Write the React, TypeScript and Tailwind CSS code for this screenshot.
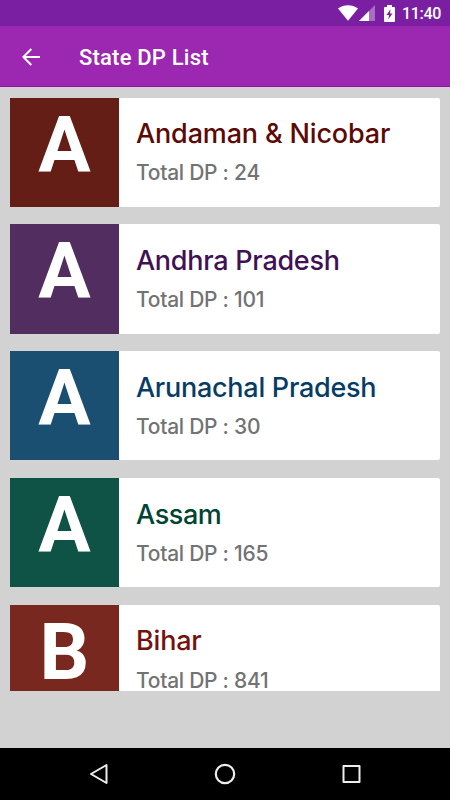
import React from 'react';

interface StateItem {
  name: string;
  total: number;
  tile: string;
  title: string;
}

const states: StateItem[] = [
  { name: 'Andaman & Nicobar', total: 24, tile: 'bg-[#641e16]', title: 'text-[#5c0a05] tracking-[-0.15px]' },
  { name: 'Andhra Pradesh', total: 101, tile: 'bg-[#512e5f]', title: 'text-[#3f1155] tracking-[-0.27px]' },
  { name: 'Arunachal Pradesh', total: 30, tile: 'bg-[#1b4f72]', title: 'text-[#063c66] tracking-[-0.27px]' },
  { name: 'Assam', total: 165, tile: 'bg-[#0e5345]', title: 'text-[#004433] tracking-[-0.4px]' },
  { name: 'Bihar', total: 841, tile: 'bg-[#78281f]', title: 'text-[#74130e] tracking-[-0.2px]' },
];

const StatusBar: React.FC = () => (
  <div className="h-[26px] shrink-0 bg-[#7b1fa2] flex items-center justify-end pr-[9px] text-white">
    <svg width="20" height="16" viewBox="0 0 20 16" fill="currentColor">
      <path d="M0 3.5C5.5-1 14.5-1 20 3.5L10 15.8Z" />
    </svg>
    <svg className="ml-[1px]" width="16" height="16" viewBox="0 0 16 16" fill="currentColor">
      <path d="M0 16L16 0V16Z" opacity="0.35" />
      <path d="M0 16L10 6V16Z" />
    </svg>
    <svg className="ml-[9px]" width="11" height="17" viewBox="0 0 11 17">
      <path d="M3 0H8V2H10Q11 2 11 3V16Q11 17 10 17H1Q0 17 0 16V3Q0 2 1 2H3Z" fill="#fff" />
      <path d="M6.5 4.2L2.5 10H5L4.4 14.3L8.5 8.6H6Z" fill="#7b1fa2" />
    </svg>
    <span className="ml-[7px] pt-[2px] font-['Roboto',sans-serif] font-medium text-[16px] leading-[24px] tracking-[-0.3px]">11:40</span>
  </div>
);

const AppBar: React.FC = () => (
  <div className="h-[61px] shrink-0 bg-[#9c27b0] border-b border-[#9412ae] flex items-center pl-[22px] text-white">
    <svg className="mt-[2px]" width="18" height="18" viewBox="0 0 18 18" fill="none" stroke="currentColor" strokeWidth="2">
      <path d="M18 9H1.5M9.3 1L1.4 9L9.3 17" />
    </svg>
    <h1 className="ml-[39px] mt-[4px] font-['Roboto',sans-serif] font-medium text-[22px] leading-[28px] tracking-[0.2px]">State DP List</h1>
  </div>
);

const StateCard: React.FC<{ item: StateItem }> = ({ item }) => (
  <div className="h-[109.4px] shrink-0 bg-white rounded-r-[2px] overflow-hidden flex">
    <div className={`w-[109px] shrink-0 flex justify-center text-white ${item.tile}`}>
      <span className="font-['Roboto',sans-serif] font-bold text-[78px] leading-[96px]">{item.name.charAt(0)}</span>
    </div>
    <div className="pl-[17px] pt-[19.7px] font-['Inter',sans-serif] whitespace-nowrap">
      <h2 className={`font-medium text-[27px] leading-[34px] ${item.title}`}>{item.name}</h2>
      <p className="mt-[8.3px] font-medium text-[21px] leading-[28px] tracking-[-0.27px] text-[#737373]">Total DP : {item.total}</p>
    </div>
  </div>
);

const NavBar: React.FC = () => (
  <div className="h-[52px] shrink-0 bg-black flex items-center justify-between pl-[88px] pr-[89px]">
    <svg width="20" height="22" viewBox="0 0 20 22" fill="none" stroke="#eee" strokeWidth="2" strokeLinejoin="round">
      <path d="M18.5 2V20L3 11Z" />
    </svg>
    <svg width="22" height="22" viewBox="0 0 22 22" fill="none" stroke="#eee" strokeWidth="2.2">
      <circle cx="11" cy="11" r="9.2" />
    </svg>
    <svg width="20" height="20" viewBox="0 0 20 20" fill="none" stroke="#eee" strokeWidth="2" strokeLinejoin="round">
      <rect x="2.5" y="2" width="16" height="16" />
    </svg>
  </div>
);

const App: React.FC = () => {
  return (
    <div className="w-[450px] h-[800px] bg-[#d2d2d2] flex flex-col overflow-hidden">
      <StatusBar />
      <AppBar />
      <div className="h-[604.4px] shrink-0 overflow-hidden px-[10px] pt-[10.5px] flex flex-col gap-[17.4px]">
        {states.map((item) => (
          <StateCard key={item.name} item={item} />
        ))}
      </div>
      <div className="flex-1" />
      <NavBar />
    </div>
  );
};

export default App;
